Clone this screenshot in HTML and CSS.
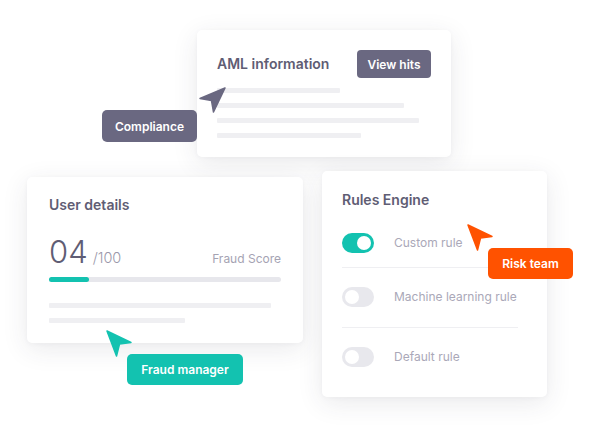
FILE: index.html
```html
<!DOCTYPE html>
<html lang="en">
<head>
<meta charset="utf-8">
<title>Roles</title>
<link rel="stylesheet" href="styles.css">
</head>
<body>
<div class="canvas">
  <section class="card card-aml">
    <div class="card-head">
      <h2 class="card-title">AML information</h2>
      <button class="btn">View hits</button>
    </div>
    <div class="lines">
      <span class="line w123"></span>
      <span class="line w187"></span>
      <span class="line w202"></span>
      <span class="line w144"></span>
    </div>
  </section>

  <section class="card card-user">
    <h2 class="card-title">User details</h2>
    <div class="score-row">
      <div class="score"><span class="score-num">04</span><span class="score-max">/100</span></div>
      <span class="score-label">Fraud Score</span>
    </div>
    <div class="progress"><div class="progress-fill"></div></div>
    <div class="lines lines-user">
      <span class="line w222"></span>
      <span class="line w136"></span>
    </div>
  </section>

  <section class="card card-rules">
    <h2 class="card-title">Rules Engine</h2>
    <ul class="rules">
      <li class="rule rule-first"><span class="toggle on"></span><span class="rule-label">Custom rule</span></li>
      <li class="rule"><span class="toggle"></span><span class="rule-label">Machine learning rule</span></li>
      <li class="rule rule-last"><span class="toggle"></span><span class="rule-label">Default rule</span></li>
    </ul>
  </section>

  <svg class="cursor cursor-compliance" width="28" height="28" viewBox="0 0 28 28"><path d="M26 1 L1 11.5 L12.5 13.5 L14.5 25 Z" /></svg>
  <span class="badge badge-compliance">Compliance</span>

  <svg class="cursor cursor-fraud" width="28" height="28" viewBox="0 0 28 28"><path d="M1 1 L25 12.5 L13.5 14 L10.5 26 Z" /></svg>
  <span class="badge badge-fraud">Fraud manager</span>

  <svg class="cursor cursor-risk" width="28" height="28" viewBox="0 0 28 28"><path d="M1 1 L25 12.5 L13.5 14 L10.5 26 Z" /></svg>
  <span class="badge badge-risk">Risk team</span>
</div>
</body>
</html>
```

FILE: styles.css
```css
* { box-sizing: border-box; }

html, body {
  margin: 0;
  padding: 0;
  background: #ffffff;
}

body {
  font-family: Inter, "Noto Sans", "Liberation Sans", sans-serif;
  color: #5f5d74;
}

.canvas {
  position: relative;
  width: 600px;
  height: 428px;
  overflow: hidden;
}

.card {
  position: absolute;
  background: #ffffff;
  border-radius: 5px;
  box-shadow: 0 6px 26px rgba(50, 50, 70, 0.10), 0 1px 4px rgba(50, 50, 70, 0.04);
}

.card-title {
  margin: 0;
  font-size: 14px;
  line-height: 20px;
  font-weight: 600;
  color: #5f5d74;
}

/* AML card */
.card-aml {
  left: 197px;
  top: 30px;
  width: 254px;
  height: 127px;
  padding: 20px 20px 0 20px;
}

.card-head {
  display: flex;
  align-items: center;
  justify-content: space-between;
  height: 28px;
}

.btn {
  border: 0;
  margin: 0;
  height: 28px;
  width: 74px;
  padding: 0;
  border-radius: 4px;
  background: #6a6881;
  color: #ffffff;
  font-family: inherit;
  font-size: 12px;
  font-weight: 600;
}

.lines {
  display: flex;
  flex-direction: column;
  gap: 10px;
  margin-top: 10px;
}

.line {
  display: block;
  height: 5px;
  border-radius: 1px;
  background: #efeff2;
}

.w123 { width: 123px; }
.w187 { width: 187px; }
.w202 { width: 202px; }
.w144 { width: 144px; }
.w222 { width: 222px; }
.w136 { width: 136px; }

/* User card */
.card-user {
  left: 27px;
  top: 177px;
  width: 276px;
  height: 166px;
  padding: 18px 22px 0 22px;
}

.score-row {
  display: flex;
  align-items: baseline;
  justify-content: space-between;
  margin-top: 20px;
}

.score {
  display: flex;
  align-items: baseline;
  gap: 5px;
}

.score-num {
  font-size: 31px;
  line-height: 33px;
  font-weight: 300;
  color: #5f5d74;
}

.score-max {
  font-size: 14.5px;
  font-weight: 300;
  color: #9a98aa;
}

.score-label {
  font-size: 12px;
  color: #a5a3b3;
}

.progress {
  margin-top: 9px;
  height: 5px;
  border-radius: 3px;
  background: #e7e7ec;
}

.progress-fill {
  width: 40px;
  height: 5px;
  border-radius: 3px;
  background: #13c2b0;
}

.lines-user {
  margin-top: 21px;
}

/* Rules card */
.card-rules {
  left: 322px;
  top: 171px;
  width: 225px;
  height: 226px;
  padding: 19px 20px 0 20px;
}

.rules {
  list-style: none;
  margin: 0;
  padding: 0;
  width: 176px;
}

.rule {
  display: flex;
  align-items: center;
  gap: 20px;
  padding: 19px 0 20px;
  border-bottom: 1px solid #efeff2;
  white-space: nowrap;
}

.rule-first {
  padding-top: 23px;
  padding-bottom: 14px;
}

.rule-last {
  border-bottom: 0;
}

.rule-label {
  font-size: 12px;
  line-height: 20px;
  color: #aaa8b8;
}

.toggle {
  position: relative;
  flex: none;
  width: 32px;
  height: 20px;
  border-radius: 10px;
  background: #e8e8ed;
}

.toggle::after {
  content: "";
  position: absolute;
  top: 3px;
  left: 3px;
  width: 14px;
  height: 14px;
  border-radius: 50%;
  background: #ffffff;
}

.toggle.on {
  background: #13c2b0;
}

.toggle.on::after {
  left: 15px;
}

/* Badges & cursors */
.badge {
  position: absolute;
  display: flex;
  align-items: center;
  justify-content: center;
  border-radius: 5px;
  color: #ffffff;
  font-size: 12px;
  font-weight: 600;
}

.badge-compliance {
  left: 102px;
  top: 110px;
  width: 95px;
  height: 32px;
  background: #6a6881;
}

.badge-fraud {
  left: 127px;
  top: 354px;
  width: 116px;
  height: 31px;
  background: #13c2b0;
}

.badge-risk {
  left: 488px;
  top: 248px;
  width: 85px;
  height: 31px;
  background: #ff5200;
}

.cursor {
  position: absolute;
  overflow: visible;
}

.cursor path {
  stroke-width: 1.5;
  stroke-linejoin: round;
}

.cursor-compliance { left: 199px; top: 87px; }
.cursor-compliance path { fill: #6a6881; stroke: #6a6881; }

.cursor-fraud { left: 106px; top: 330px; }
.cursor-fraud path { fill: #13c2b0; stroke: #13c2b0; }

.cursor-risk { left: 467px; top: 224px; }
.cursor-risk path { fill: #ff5200; stroke: #ff5200; }
```
